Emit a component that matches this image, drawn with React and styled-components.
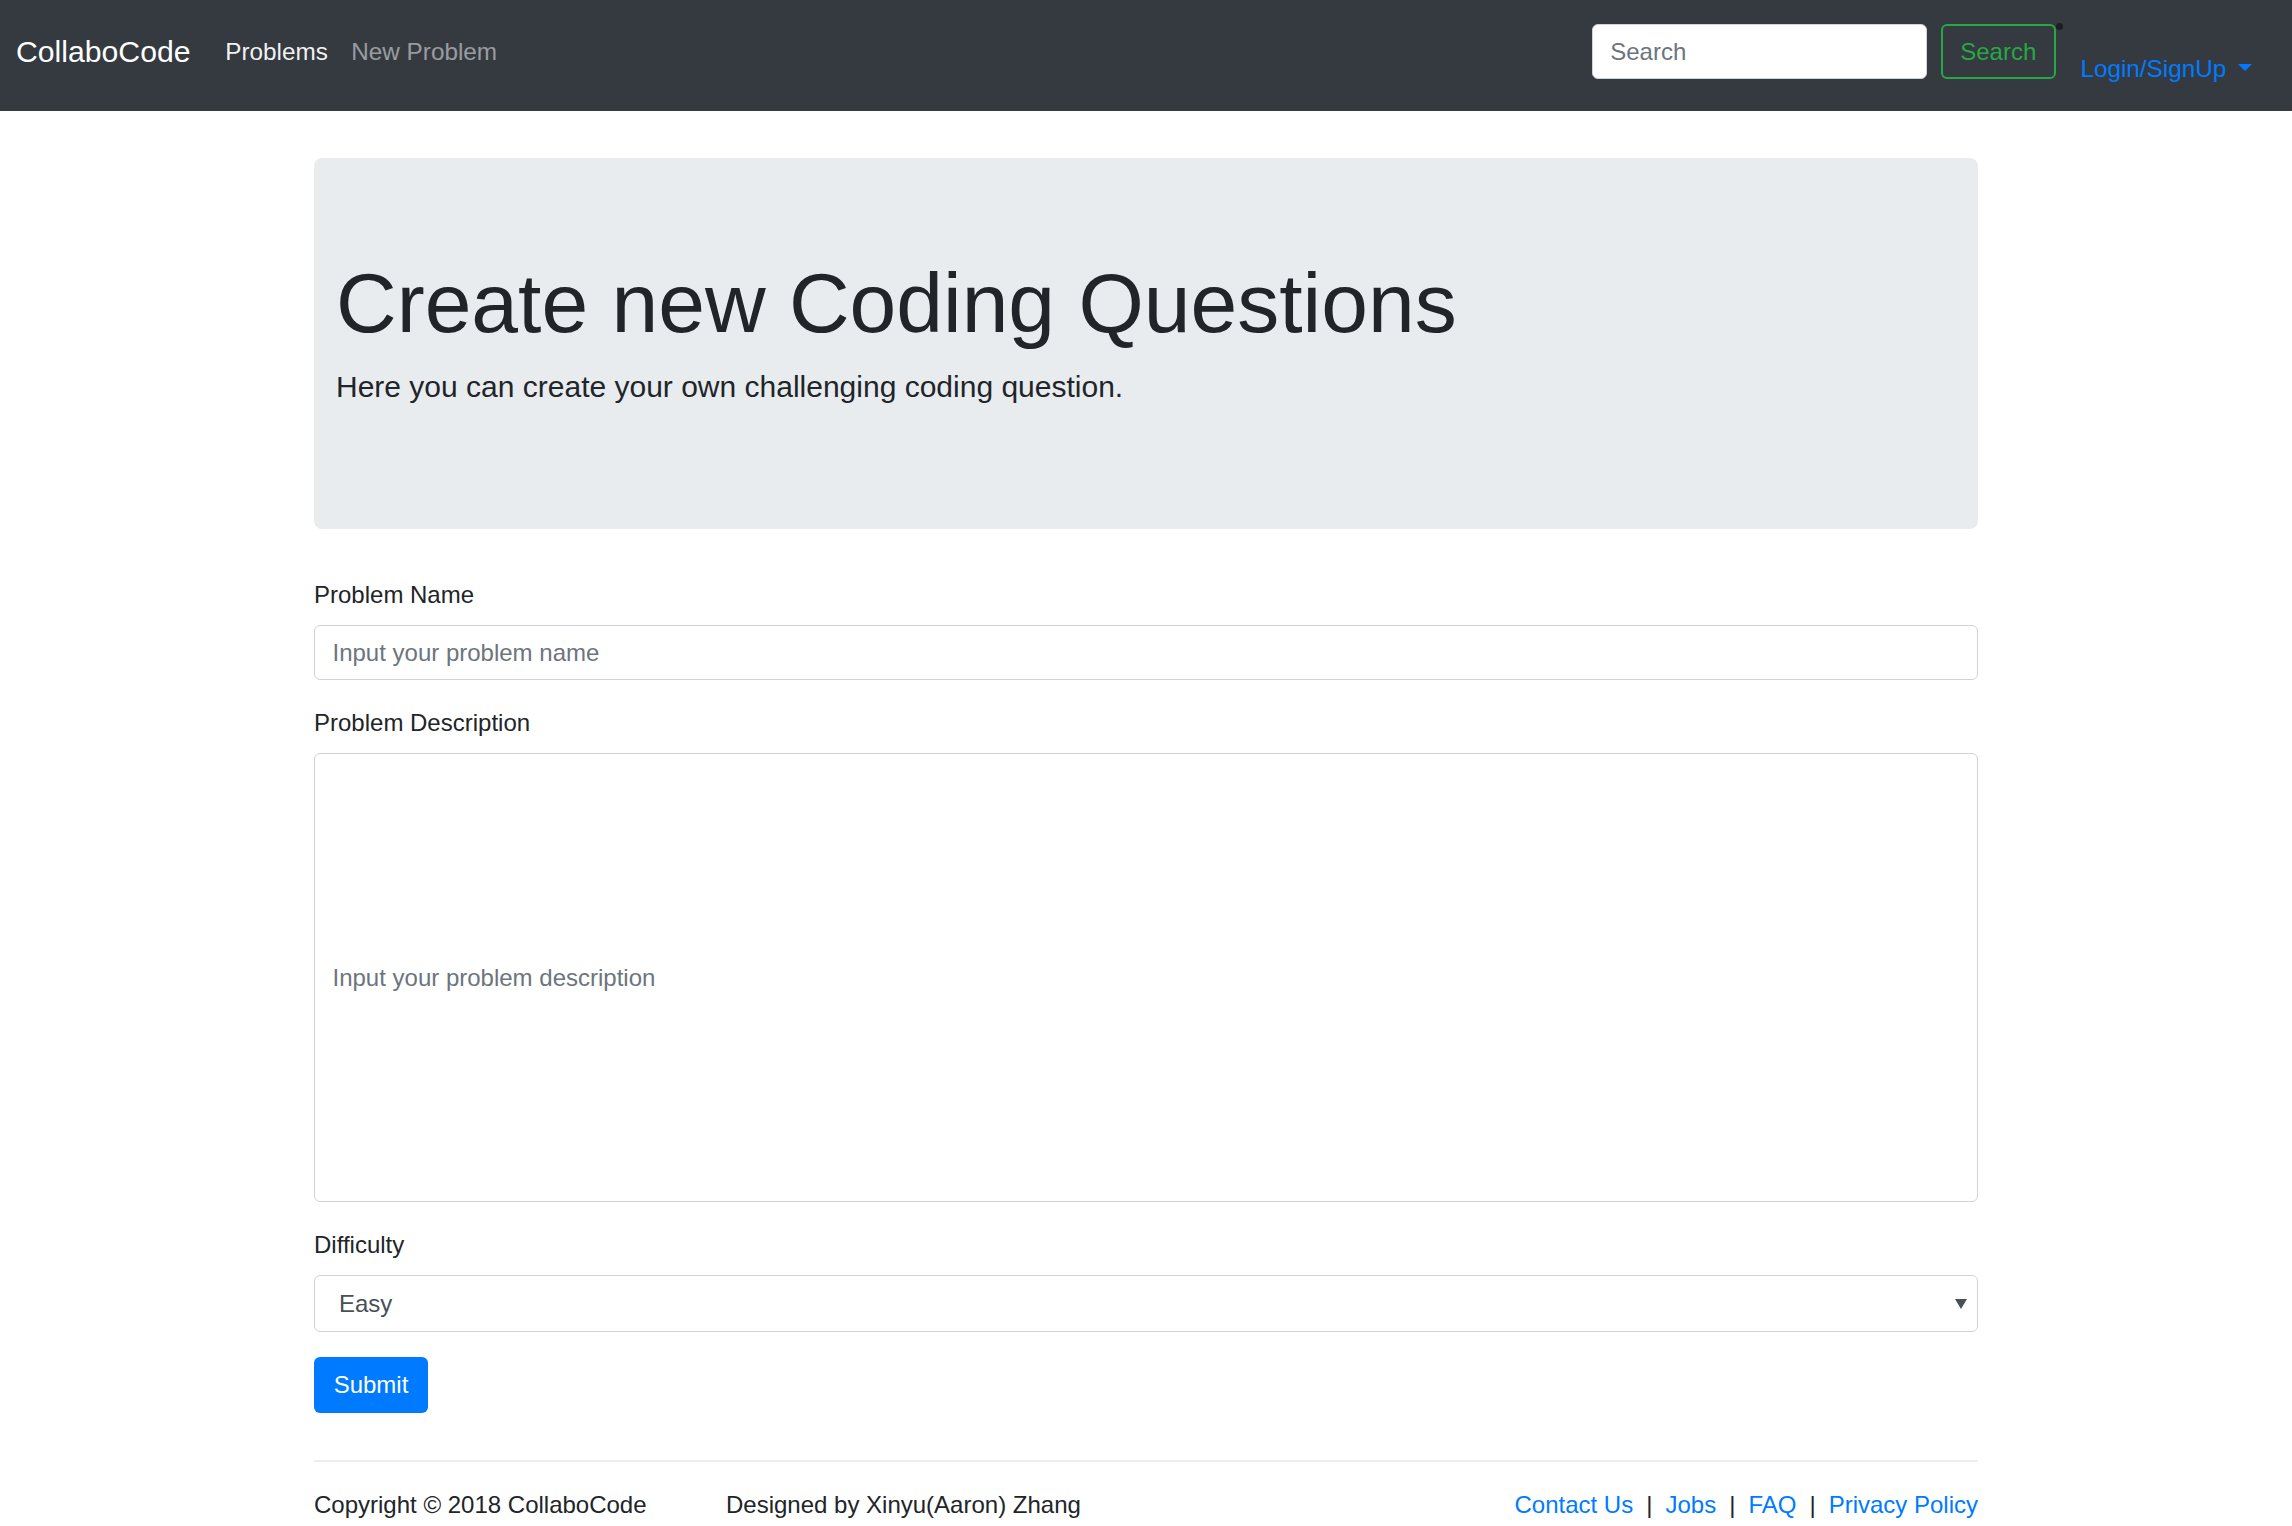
import React from "react";
import styled, { createGlobalStyle } from "styled-components";

const GlobalStyle = createGlobalStyle`
  html, body {
    margin: 0;
    padding: 0;
    background: #fff;
  }
  body {
    font-family: "Liberation Sans", Arial, sans-serif;
    color: #212529;
  }
  * {
    box-sizing: border-box;
  }
`;

export default function App() {
  return (
    <>
      <GlobalStyle />
      <Navbar>
        <Brand href="#">CollaboCode</Brand>
        <NavLink href="#" active>
          Problems
        </NavLink>
        <NavLink href="#">New Problem</NavLink>
        <RightGroup>
          <SearchInput placeholder="Search" />
          <SearchButton>
            Search
            <Dot />
          </SearchButton>
          <LoginLink href="#">Login/SignUp</LoginLink>
        </RightGroup>
      </Navbar>

      <Container>
        <Jumbotron>
          <Heading>Create new Coding Questions</Heading>
          <Lead>Here you can create your own challenging coding question.</Lead>
        </Jumbotron>

        <form onSubmit={(e) => e.preventDefault()}>
          <FormGroup>
            <Label>Problem Name</Label>
            <TextInput placeholder="Input your problem name" />
          </FormGroup>
          <FormGroup>
            <Label>Problem Description</Label>
            <TextInput tall placeholder="Input your problem description" />
          </FormGroup>
          <FormGroup>
            <Label>Difficulty</Label>
            <SelectWrap>
              <Select defaultValue="Easy">
                <option>Easy</option>
                <option>Medium</option>
                <option>Hard</option>
              </Select>
            </SelectWrap>
          </FormGroup>
          <SubmitButton type="submit">Submit</SubmitButton>
        </form>

        <Rule />
        <Footer>
          <FooterText>Copyright © 2018 CollaboCode</FooterText>
          <FooterText>Designed by Xinyu(Aaron) Zhang</FooterText>
          <FooterLinks>
            <FooterLink href="#">Contact Us</FooterLink>
            <Sep>|</Sep>
            <FooterLink href="#">Jobs</FooterLink>
            <Sep>|</Sep>
            <FooterLink href="#">FAQ</FooterLink>
            <Sep>|</Sep>
            <FooterLink href="#">Privacy Policy</FooterLink>
          </FooterLinks>
        </Footer>
      </Container>
    </>
  );
}

const Navbar = styled.nav`
  display: flex;
  align-items: flex-start;
  height: 111px;
  padding: 24px 28px 0 16px;
  background: #343a40;
`;

const Brand = styled.a`
  font-size: 30.2px;
  line-height: 55px;
  color: #fff;
  text-decoration: none;
  margin-right: 23px;
`;

const NavLink = styled.a`
  font-size: 24.3px;
  line-height: 55px;
  padding: 0 11.7px;
  text-decoration: none;
  color: ${(p) => (p.active ? "rgba(255,255,255,0.95)" : "rgba(255,255,255,0.5)")};
`;

const RightGroup = styled.div`
  margin-left: auto;
  display: flex;
  align-items: flex-start;
`;

const SearchInput = styled.input`
  width: 335px;
  height: 55px;
  padding: 0 17.5px;
  font-family: inherit;
  font-size: 24px;
  color: #495057;
  background: #fff;
  border: 1px solid #ced4da;
  border-radius: 6px;
  outline: none;
  &::placeholder {
    color: #6c757d;
  }
`;

const SearchButton = styled.button`
  position: relative;
  margin-left: 14px;
  height: 55px;
  padding: 0 17.5px;
  font-family: inherit;
  font-size: 24px;
  color: #28a745;
  background: transparent;
  border: 2px solid #28a745;
  border-radius: 6px;
`;

const Dot = styled.span`
  position: absolute;
  top: -3px;
  right: -9px;
  width: 7px;
  height: 7px;
  border-radius: 50%;
  background: #1b1e21;
`;

const LoginLink = styled.a`
  margin-left: 13px;
  margin-top: 27px;
  padding: 0 11.7px;
  font-size: 24.3px;
  line-height: 35px;
  color: #007bff;
  text-decoration: none;
  &::after {
    content: "";
    display: inline-block;
    margin-left: 12px;
    vertical-align: 6px;
    border-top: 7px solid #007bff;
    border-left: 7px solid transparent;
    border-right: 7px solid transparent;
  }
`;

const Container = styled.main`
  width: 1664px;
  margin: 0 auto;
`;

const Jumbotron = styled.section`
  margin-top: 47px;
  margin-bottom: 48px;
  padding: 96px 22px 96px;
  background: #e9ecef;
  border-radius: 8px;
`;

const Heading = styled.h1`
  margin: 0 0 12px;
  font-size: 84px;
  font-weight: 300;
  line-height: 98.4px;
  color: #212529;
`;

const Lead = styled.p`
  margin: 0 0 24px;
  font-size: 30px;
  font-weight: 300;
  line-height: 45px;
  color: #212529;
`;

const FormGroup = styled.div`
  margin-bottom: 25px;
`;

const Label = styled.label`
  display: block;
  margin-bottom: 13px;
  font-size: 24px;
  line-height: 35px;
  color: #212529;
`;

const TextInput = styled.input`
  display: block;
  width: 100%;
  height: ${(p) => (p.tall ? "449px" : "55px")};
  padding: 0 17.5px;
  font-family: inherit;
  font-size: 24px;
  color: #495057;
  background: #fff;
  border: 1px solid #ced4da;
  border-radius: 6px;
  outline: none;
  &::placeholder {
    color: #6c757d;
  }
`;

const SelectWrap = styled.div`
  position: relative;
  &::after {
    content: "";
    position: absolute;
    right: 11px;
    top: 24px;
    border-top: 10px solid #495057;
    border-left: 6px solid transparent;
    border-right: 6px solid transparent;
    pointer-events: none;
  }
`;

const Select = styled.select`
  display: block;
  width: 100%;
  height: 57px;
  padding: 0 24px;
  font-family: "Liberation Sans", Arial, sans-serif;
  font-size: 24px;
  color: #495057;
  background: #fff;
  border: 1px solid #ced4da;
  border-radius: 6px;
  appearance: none;
  outline: none;
`;

const SubmitButton = styled.button`
  display: block;
  width: 114px;
  height: 56px;
  padding: 0;
  font-family: inherit;
  font-size: 24px;
  color: #fff;
  background: #007bff;
  border: none;
  border-radius: 6px;
`;

const Rule = styled.hr`
  margin: 47px 0 0;
  border: 0;
  border-top: 2px solid #eee;
`;

const Footer = styled.footer`
  display: grid;
  grid-template-columns: 412px 1fr auto;
  padding-top: 25px;
  font-size: 24px;
  line-height: 35px;
`;

const FooterText = styled.span`
  color: #212529;
`;

const FooterLinks = styled.div`
  display: flex;
`;

const FooterLink = styled.a`
  color: #007bff;
  text-decoration: none;
`;

const Sep = styled.span`
  margin: 0 13px;
  color: #212529;
`;
